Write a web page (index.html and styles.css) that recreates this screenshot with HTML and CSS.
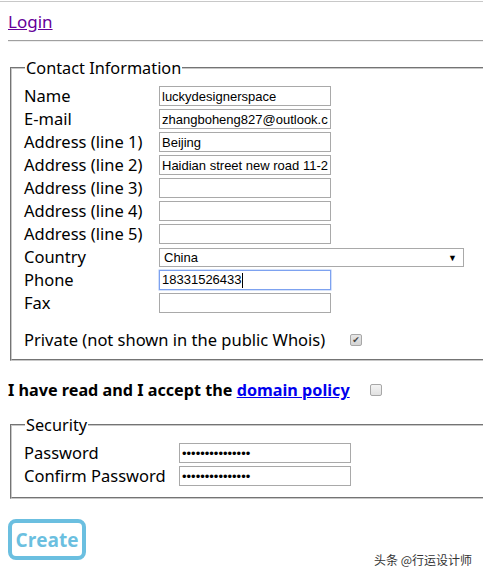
FILE: index.html
```html
<!DOCTYPE html>
<html>
<head>
<meta charset="utf-8">
<link rel="stylesheet" href="styles.css">
</head>
<body>
<div class="topline"></div>
<div class="page">
  <a class="login" href="#">Login</a>
  <div class="rule"></div>

  <fieldset class="box contact">
    <legend class="legend">Contact Information</legend>
    <div class="grid">
      <span class="lbl">Name</span><input class="field" value="luckydesignerspace">
      <span class="lbl">E-mail</span><input class="field" value="zhangboheng827@outlook.com">
      <span class="lbl">Address (line 1)</span><input class="field" value="Beijing">
      <span class="lbl">Address (line 2)</span><input class="field" value="Haidian street new road 11-2">
      <span class="lbl">Address (line 3)</span><input class="field" value="">
      <span class="lbl">Address (line 4)</span><input class="field" value="">
      <span class="lbl">Address (line 5)</span><input class="field" value="">
      <span class="lbl">Country</span>
      <div class="select"><span class="sel-text">China</span><span class="sel-arrow">▼</span></div>
      <span class="lbl">Phone</span>
      <div class="field focus"><span>18331526433</span><span class="caret"></span></div>
      <span class="lbl">Fax</span><input class="field" value="">
    </div>
    <div class="private">
      <span class="lbl">Private (not shown in the public Whois)</span>
      <span class="check checked">✔</span>
    </div>
  </fieldset>

  <div class="policy">
    <span class="policy-text">I have read and I accept the <a class="policy-link" href="#">domain policy</a></span>
    <span class="check"></span>
  </div>

  <fieldset class="box security">
    <legend class="legend">Security</legend>
    <div class="grid grid-wide">
      <span class="lbl">Password</span><input class="field" type="password" value="passwordpasswor">
      <span class="lbl">Confirm Password</span><input class="field" type="password" value="passwordpasswor">
    </div>
  </fieldset>

  <div class="bottom">
    <button class="create">Create</button>
    <span class="watermark">头条 @行运设计师</span>
  </div>
</div>
</body>
</html>
```

FILE: styles.css
```css
html {
  overflow: hidden;
}
html, body {
  margin: 0;
  padding: 0;
  background: #fff;
}
body {
  width: 483px;
  min-height: 577px;
  font-family: "Noto Sans", "Open Sans", sans-serif;
  color: #000;
}
.topline {
  height: 1px;
  margin-top: 1px;
  background: #c8c8c8;
}
.page {
  padding-left: 8px;
}
.login {
  display: block;
  width: 44px;
  margin-top: 9px;
  height: 22px;
  font-size: 17px;
  line-height: 22px;
  color: #660099;
  text-decoration: underline;
}
.rule {
  margin-top: 7px;
  height: 1px;
  background: #a0a0a0;
  border-bottom: 1px solid #eee;
}
.box {
  margin: 0 0 0 2px;
  border: 2px groove #c8c8c8;
  border-right: none;
  padding: 0 0 0 12px;
  min-width: 0;
}
.contact {
  margin-top: 16px;
  padding-bottom: 9px;
}
.legend {
  padding: 0 1px;
  margin-left: 1px;
  font-size: 16.3px;
  line-height: 20px;
  color: #000;
}
.grid {
  display: grid;
  grid-template-columns: 135px 172px;
  row-gap: 3px;
  margin-top: 8px;
}
.grid-wide {
  grid-template-columns: 155px 172px;
}
.lbl {
  font-size: 16.5px;
  line-height: 20px;
  white-space: nowrap;
}
.field {
  box-sizing: border-box;
  width: 172px;
  height: 20px;
  margin: 0;
  padding: 0 2px;
  border: 1px solid #a9a9a9;
  font-family: "Liberation Sans", Arial, sans-serif;
  font-size: 13px;
  line-height: 18px;
  color: #000;
  background: #fff;
  outline: none;
  overflow: hidden;
  white-space: nowrap;
  display: flex;
  align-items: center;
}
.focus {
  border-color: #7da2f0;
  box-shadow: 0 0 0 0.5px #a9c4f5;
}
.caret {
  display: inline-block;
  width: 1px;
  height: 15px;
  background: #000;
}
.select {
  box-sizing: border-box;
  width: 305px;
  height: 19px;
  margin-top: 1px;
  border: 1px solid #a9a9a9;
  display: flex;
  align-items: center;
  justify-content: space-between;
  padding: 0 6px 0 4px;
  font-family: "Liberation Sans", Arial, sans-serif;
  font-size: 13px;
}
.sel-arrow {
  font-size: 9px;
  color: #000;
}
.private {
  display: flex;
  align-items: center;
  margin-top: 17px;
}
.private .lbl {
  width: 326px;
}
.check {
  box-sizing: border-box;
  display: inline-flex;
  align-items: center;
  justify-content: center;
  width: 12px;
  height: 12px;
  border: 1px solid #a7a7a7;
  border-radius: 2px;
  background: linear-gradient(#f4f4f4, #e1e1e1);
  font-size: 9px;
  line-height: 1;
  color: #444;
  font-family: "DejaVu Sans", sans-serif;
}
.checked {
  background: linear-gradient(#e6e6e6, #d4d4d4);
}
.policy {
  display: flex;
  align-items: center;
  margin-top: 18px;
  height: 22px;
  font-size: 16.2px;
  font-weight: bold;
}
.policy-text {
  width: 362px;
}
.policy-link {
  color: #0000ee;
  text-decoration: underline;
}
.security {
  margin-top: 14px;
  padding-bottom: 11px;
}
.bottom {
  display: flex;
  align-items: flex-start;
  justify-content: space-between;
  margin-top: 20px;
  height: 52px;
  width: 464px;
}
.create {
  box-sizing: border-box;
  width: 78px;
  height: 41px;
  border: 4px solid #6bbfe0;
  border-radius: 8px;
  background: #fff;
  color: #6bbfe0;
  font-family: "Open Sans", sans-serif;
  font-weight: bold;
  font-size: 19px;
  padding: 0;
  margin: 0;
}
.watermark {
  margin-top: 33px;
  font-family: "Noto Sans CJK SC", sans-serif;
  font-size: 12px;
  line-height: 16px;
  color: #333;
}
```
